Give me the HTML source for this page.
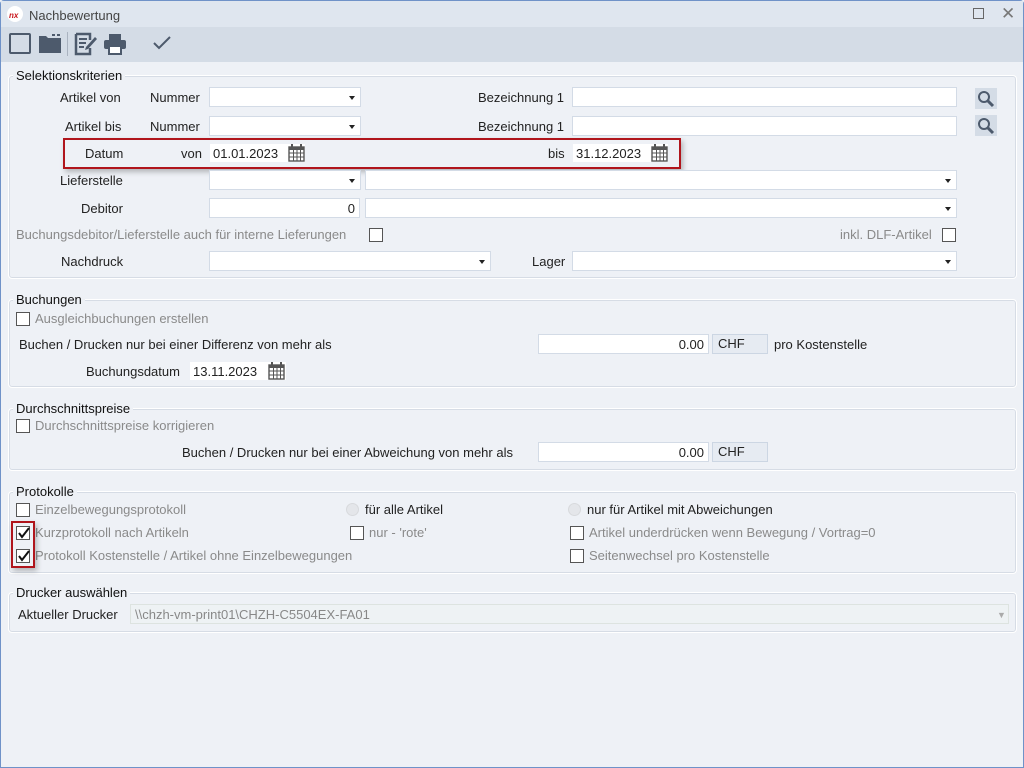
<!DOCTYPE html>
<html><head><meta charset="utf-8">
<style>
*{box-sizing:border-box;margin:0;padding:0}
body{width:1024px;height:768px;overflow:hidden;background:#eef1f6;font-family:"Liberation Sans",Verdana,sans-serif;font-size:13px;color:#222;position:relative}
.win{position:absolute;left:0;top:0;width:1024px;height:768px;border:1px solid #6f92c8;border-radius:4px 4px 0 0}
.a{position:absolute}
.t{position:absolute;line-height:16px;white-space:nowrap;margin-top:1px}
.g{color:#8a8a8a}
.grp{position:absolute;border:1px solid #fff;border-radius:4px;box-shadow:0 0 0 1px #d6dce5 inset}
.leg{position:absolute;background:#eef1f6;padding:0 3px;line-height:16px;white-space:nowrap;color:#111;margin-top:1px}
.in{position:absolute;background:#fff;border:1px solid #d3dbe6;height:20px;line-height:19px;padding:0 4px;white-space:nowrap}
.dd::after{content:"";position:absolute;right:5px;top:8px;border-left:3.5px solid transparent;border-right:3.5px solid transparent;border-top:4px solid #222}
.cb{position:absolute;width:14px;height:14px;border:1px solid #555;background:#fff}
.rd{position:absolute;width:13px;height:13px;border-radius:50%;background:#e4e6ea;border:1px solid #d8dadd}
.chf{position:absolute;height:20px;border:1px solid #ccd6e3;background:#e6ebf2;padding-left:5px;line-height:17px}
.red{position:absolute;border:2px solid #b0151c;box-shadow:2px 3px 5px rgba(0,0,0,.25)}
</style></head><body>
<div class="win"></div>
<div class="a" style="left:1px;top:1px;width:1022px;height:26px;background:#dfe6ef"></div>
<div class="a" style="left:1px;top:27px;width:1022px;height:35px;background:#d4dce6"></div>
<div class="a" style="left:7px;top:6px;width:16px;height:16px;border-radius:50%;background:#fff"></div>
<div class="t" style="left:9px;top:7px;font-size:8px;font-weight:bold;color:#c8161d;font-style:italic">nx</div>
<div class="t" style="left:29px;top:7px;color:#444">Nachbewertung</div>
<div class="a" style="left:973px;top:8px;width:11px;height:11px;border:1px solid #666"></div>
<div class="t" style="left:1001px;top:5px;font-size:17px;color:#777">✕</div>
<!-- toolbar -->
<div class="a" style="left:9px;top:33px;width:22px;height:21px;border:2.5px solid #4d5a6c;border-radius:2px"></div>
<svg class="a" style="left:38px;top:33px" width="24" height="21"><path d="M1 3h7l2 2h13v15H1z" fill="#4d5a6c"/><rect x="14" y="1" width="3" height="2" fill="#4d5a6c"/><rect x="19" y="1" width="3" height="2" fill="#4d5a6c"/></svg>
<div class="a" style="left:67px;top:32px;width:1px;height:24px;background:#aab3c0"></div>
<svg class="a" style="left:74px;top:32px" width="24" height="24"><path d="M2 2h14v6M16 16v6H2V2" fill="none" stroke="#4d5a6c" stroke-width="2.5"/><path d="M5 7h8M5 11h7M5 15h5" stroke="#4d5a6c" stroke-width="2"/><path d="M21 5l2 2-9 10-3 1 1-3z" fill="#4d5a6c"/></svg>
<svg class="a" style="left:103px;top:33px" width="24" height="22"><rect x="6" y="1" width="12" height="6" fill="#4d5a6c"/><rect x="1" y="7" width="22" height="9" rx="2" fill="#4d5a6c"/><rect x="6" y="13" width="12" height="8" fill="#fff" stroke="#4d5a6c" stroke-width="2"/></svg>
<svg class="a" style="left:152px;top:35px" width="20" height="16"><path d="M2 8l5 5 11-11" fill="none" stroke="#4d5a6c" stroke-width="2"/></svg>

<!-- Group 1 -->
<div class="grp" style="left:8px;top:75px;width:1009px;height:204px"></div>
<div class="leg" style="left:13px;top:67px">Selektionskriterien</div>
<div class="t" style="left:60px;top:89px">Artikel von</div>
<div class="t" style="left:150px;top:89px">Nummer</div>
<div class="in dd" style="left:209px;top:87px;width:152px"></div>
<div class="t" style="left:478px;top:89px">Bezeichnung 1</div>
<div class="in" style="left:572px;top:87px;width:385px"></div>
<svg class="a" style="left:975px;top:88px" width="22" height="21"><rect width="22" height="21" fill="#d4dce6"/><circle cx="9" cy="9" r="5" fill="none" stroke="#4d5a6c" stroke-width="2"/><path d="M13 13l5 5" stroke="#4d5a6c" stroke-width="3"/></svg>

<div class="t" style="left:65px;top:118px">Artikel bis</div>
<div class="t" style="left:150px;top:118px">Nummer</div>
<div class="in dd" style="left:209px;top:116px;width:152px"></div>
<div class="t" style="left:478px;top:118px">Bezeichnung 1</div>
<div class="in" style="left:572px;top:116px;width:385px"></div>
<svg class="a" style="left:975px;top:115px" width="22" height="21"><rect width="22" height="21" fill="#d4dce6"/><circle cx="9" cy="9" r="5" fill="none" stroke="#4d5a6c" stroke-width="2"/><path d="M13 13l5 5" stroke="#4d5a6c" stroke-width="3"/></svg>

<div class="red" style="left:63px;top:138px;width:618px;height:31px"></div>
<div class="t" style="left:85px;top:145px">Datum</div>
<div class="t" style="left:181px;top:145px">von</div>
<div class="in" style="left:209px;top:143px;width:97px;border-color:#eef1f6;padding-left:3px">01.01.2023</div>
<div class="t" style="left:548px;top:145px">bis</div>
<div class="in" style="left:572px;top:143px;width:97px;border-color:#eef1f6;padding-left:3px">31.12.2023</div>
<svg class="a" style="left:288px;top:143px" width="17" height="19"><rect x="1" y="4" width="15" height="14" fill="none" stroke="#555" stroke-width="1.4"/><rect x="1" y="4" width="15" height="3" fill="#555"/><path d="M4 1v4M13 1v4" stroke="#555" stroke-width="2"/><path d="M1 10h15M1 14h15M5.5 7v11M9 7v11M12.5 7v11" stroke="#555"/></svg>
<svg class="a" style="left:651px;top:143px" width="17" height="19"><rect x="1" y="4" width="15" height="14" fill="none" stroke="#555" stroke-width="1.4"/><rect x="1" y="4" width="15" height="3" fill="#555"/><path d="M4 1v4M13 1v4" stroke="#555" stroke-width="2"/><path d="M1 10h15M1 14h15M5.5 7v11M9 7v11M12.5 7v11" stroke="#555"/></svg>

<div class="t" style="left:60px;top:172px">Lieferstelle</div>
<div class="in dd" style="left:209px;top:170px;width:152px"></div>
<div class="in dd" style="left:365px;top:170px;width:592px"></div>
<div class="t" style="left:81px;top:200px">Debitor</div>
<div class="in" style="left:209px;top:198px;width:151px;text-align:right">0</div>
<div class="in dd" style="left:365px;top:198px;width:592px"></div>
<div class="t g" style="left:16px;top:226px">Buchungsdebitor/Lieferstelle auch für interne Lieferungen</div>
<div class="cb" style="left:369px;top:228px"></div>
<div class="t g" style="left:840px;top:226px">inkl. DLF-Artikel</div>
<div class="cb" style="left:942px;top:228px"></div>
<div class="t" style="left:61px;top:253px">Nachdruck</div>
<div class="in dd" style="left:209px;top:251px;width:282px"></div>
<div class="t" style="left:532px;top:253px">Lager</div>
<div class="in dd" style="left:572px;top:251px;width:385px"></div>

<!-- Group 2 -->
<div class="grp" style="left:8px;top:299px;width:1009px;height:89px"></div>
<div class="leg" style="left:13px;top:291px">Buchungen</div>
<div class="cb" style="left:16px;top:312px"></div>
<div class="t g" style="left:35px;top:310px">Ausgleichbuchungen erstellen</div>
<div class="t" style="left:19px;top:336px">Buchen / Drucken nur bei einer Differenz von mehr als</div>
<div class="in" style="left:538px;top:334px;width:171px;text-align:right">0.00</div>
<div class="chf" style="left:712px;top:334px;width:56px">CHF</div>
<div class="t" style="left:774px;top:336px">pro Kostenstelle</div>
<div class="t" style="left:86px;top:363px">Buchungsdatum</div>
<div class="in" style="left:189px;top:361px;width:98px;border-color:#eef1f6;padding-left:3px">13.11.2023</div>
<svg class="a" style="left:268px;top:361px" width="17" height="19"><rect x="1" y="4" width="15" height="14" fill="none" stroke="#555" stroke-width="1.4"/><rect x="1" y="4" width="15" height="3" fill="#555"/><path d="M4 1v4M13 1v4" stroke="#555" stroke-width="2"/><path d="M1 10h15M1 14h15M5.5 7v11M9 7v11M12.5 7v11" stroke="#555"/></svg>

<!-- Group 3 -->
<div class="grp" style="left:8px;top:408px;width:1009px;height:63px"></div>
<div class="leg" style="left:13px;top:400px">Durchschnittspreise</div>
<div class="cb" style="left:16px;top:419px"></div>
<div class="t g" style="left:35px;top:417px">Durchschnittspreise korrigieren</div>
<div class="t" style="left:182px;top:444px">Buchen / Drucken nur bei einer Abweichung von mehr als</div>
<div class="in" style="left:538px;top:442px;width:171px;text-align:right">0.00</div>
<div class="chf" style="left:712px;top:442px;width:56px">CHF</div>

<!-- Group 4 -->
<div class="grp" style="left:8px;top:491px;width:1009px;height:83px"></div>
<div class="leg" style="left:13px;top:483px">Protokolle</div>
<div class="cb" style="left:16px;top:503px"></div>
<div class="t g" style="left:35px;top:501px">Einzelbewegungsprotokoll</div>
<div class="rd" style="left:346px;top:503px"></div>
<div class="t" style="left:365px;top:501px">für alle Artikel</div>
<div class="rd" style="left:568px;top:503px"></div>
<div class="t" style="left:587px;top:501px">nur für Artikel mit Abweichungen</div>
<div class="cb" style="left:16px;top:526px"></div>
<svg class="a" style="left:17px;top:527px" width="13" height="13"><path d="M2 6l3 4 7-9" fill="none" stroke="#111" stroke-width="2"/></svg>
<div class="t g" style="left:35px;top:524px">Kurzprotokoll nach Artikeln</div>
<div class="cb" style="left:350px;top:526px"></div>
<div class="t g" style="left:369px;top:524px">nur - 'rote'</div>
<div class="cb" style="left:570px;top:526px"></div>
<div class="t g" style="left:589px;top:524px">Artikel underdrücken wenn Bewegung / Vortrag=0</div>
<div class="cb" style="left:16px;top:549px"></div>
<svg class="a" style="left:17px;top:550px" width="13" height="13"><path d="M2 6l3 4 7-9" fill="none" stroke="#111" stroke-width="2"/></svg>
<div class="t g" style="left:35px;top:547px">Protokoll Kostenstelle / Artikel ohne Einzelbewegungen</div>
<div class="cb" style="left:570px;top:549px"></div>
<div class="t g" style="left:589px;top:547px">Seitenwechsel pro Kostenstelle</div>
<div class="red" style="left:11px;top:521px;width:24px;height:47px"></div>

<!-- Group 5 -->
<div class="grp" style="left:8px;top:592px;width:1009px;height:41px"></div>
<div class="leg" style="left:13px;top:584px">Drucker auswählen</div>
<div class="t" style="left:18px;top:606px">Aktueller Drucker</div>
<div class="in" style="left:130px;top:604px;width:879px;background:#eef2f4;border-color:#dde3e0;color:#888">\\chzh-vm-print01\CHZH-C5504EX-FA01</div>
<div class="t" style="left:997px;top:606px;font-size:9px;color:#aaa">▼</div>
</body></html>
